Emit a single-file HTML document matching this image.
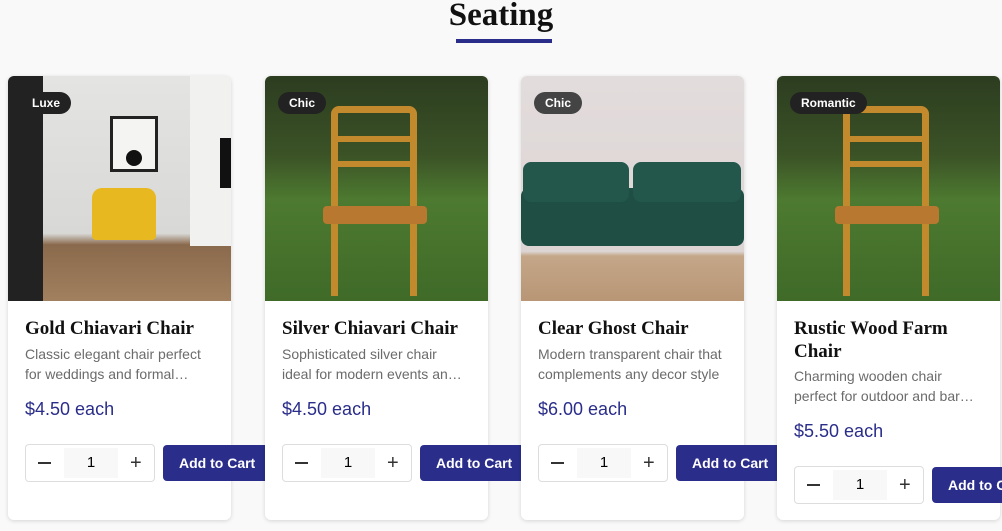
<!DOCTYPE html>
<html><head><meta charset="utf-8"><style>
*{margin:0;padding:0;box-sizing:border-box}
body{width:1002px;height:531px;overflow:hidden;background:#f9f9f9;font-family:"Liberation Sans",sans-serif;position:relative}
h1{position:absolute;top:-3px;left:0;width:1002px;text-align:center;font-family:"Liberation Serif",serif;font-weight:bold;font-size:33px;color:#111}
.bar{position:absolute;left:456px;top:39px;width:96px;height:4px;background:#2a2d8a}
.card{position:absolute;top:76px;width:223px;height:444px;background:#fff;border-radius:6px;box-shadow:0 1px 4px rgba(0,0,0,.15)}
.img{position:absolute;left:0;top:0;width:100%;height:225px;overflow:hidden;border-radius:6px 6px 0 0}
.tag{position:absolute;left:13px;top:16px;height:22px;padding:0 11px;border-radius:11px;background:#222;color:#fff;font-size:12px;font-weight:bold;line-height:22px}
.t{position:absolute;left:17px;top:241px;width:195px;font-family:"Liberation Serif",serif;font-weight:bold;font-size:19px;color:#111;line-height:23px}
.d{position:absolute;left:17px;width:190px;font-size:14px;color:#6b6b6b;line-height:20px;display:-webkit-box;-webkit-line-clamp:2;-webkit-box-orient:vertical;overflow:hidden}
.p{position:absolute;left:17px;font-size:18px;color:#2a2d8a}
.q{position:absolute;left:17px;width:130px;height:38px;border:1px solid #ddd;border-radius:4px;font-size:15px}
.q .m{position:absolute;left:12px;top:17px;width:13px;height:2px;background:#333}
.q .pl{position:absolute;left:104px;top:7px;font-size:20px;color:#333}
.q .n{position:absolute;left:38px;width:54px;top:3px;height:30px;background:#f8f8f8;text-align:center;line-height:30px}
.b{position:absolute;left:155px;width:110px;height:36px;background:#2a2d8a;color:#fff;border-radius:4px;font-size:14px;font-weight:bold;line-height:36px;padding-left:16px;white-space:nowrap;overflow:hidden}
</style></head><body>
<h1>Seating</h1><div class="bar"></div>

<div class="card" style="left:8px">
<div class="img" style="background:linear-gradient(#e4e4e2 0,#d8d8d6 70%,#8a6a4c 75%,#a0805e 100%)">
<div style="position:absolute;left:0;top:0;width:35px;height:225px;background:#222"></div>
<div style="position:absolute;left:182px;top:0;width:41px;height:170px;background:#f1f1ef"></div>
<div style="position:absolute;left:102px;top:40px;width:48px;height:56px;background:#f4f4f2;border:3px solid #222"></div>
<div style="position:absolute;left:118px;top:74px;width:16px;height:16px;border-radius:50%;background:#111"></div>
<div style="position:absolute;left:84px;top:112px;width:64px;height:52px;background:#e8b820;border-radius:10px 10px 4px 4px"></div>
<div style="position:absolute;left:212px;top:62px;width:11px;height:50px;background:#111"></div>
</div>
<div class="tag">Luxe</div>
<div class="t">Gold Chiavari Chair</div>
<div class="d" style="top:268px">Classic elegant chair perfect for weddings and formal events</div>
<div class="p" style="top:323px">$4.50 each</div>
<div class="q" style="top:368px"><i class="m"></i><span class="n">1</span><span class="pl">+</span></div>
<div class="b" style="top:369px">Add to Cart</div>
</div>

<div class="card" style="left:265px">
<div class="img" style="background:linear-gradient(#2c3d20 0,#3b5226 35%,#4d7a30 55%,#3f6a28 100%)">
<div style="position:absolute;left:66px;top:30px;width:86px;height:190px;border:7px solid #c28a2c;border-bottom:none;border-radius:8px 8px 0 0"></div>
<div style="position:absolute;left:72px;top:60px;width:74px;height:6px;background:#c28a2c"></div>
<div style="position:absolute;left:72px;top:85px;width:74px;height:6px;background:#c28a2c"></div>
<div style="position:absolute;left:58px;top:130px;width:104px;height:18px;background:#b87830;border-radius:4px"></div>
</div>
<div class="tag">Chic</div>
<div class="t">Silver Chiavari Chair</div>
<div class="d" style="top:268px;width:180px">Sophisticated silver chair ideal for modern events and more</div>
<div class="p" style="top:323px">$4.50 each</div>
<div class="q" style="top:368px"><i class="m"></i><span class="n">1</span><span class="pl">+</span></div>
<div class="b" style="top:369px">Add to Cart</div>
</div>

<div class="card" style="left:521px">
<div class="img" style="background:linear-gradient(#e3dcdc 0,#dcd5d4 78%,#c4a788 80%,#b89676 100%)">
<div style="position:absolute;left:0;top:112px;width:223px;height:58px;background:#1e4e44;border-radius:8px"></div>
<div style="position:absolute;left:2px;top:86px;width:106px;height:40px;background:#24574c;border-radius:8px"></div>
<div style="position:absolute;left:112px;top:86px;width:108px;height:40px;background:#24574c;border-radius:8px"></div>
</div>
<div class="tag" style="background:#444">Chic</div>
<div class="t">Clear Ghost Chair</div>
<div class="d" style="top:268px">Modern transparent chair that complements any decor style</div>
<div class="p" style="top:323px">$6.00 each</div>
<div class="q" style="top:368px"><i class="m"></i><span class="n">1</span><span class="pl">+</span></div>
<div class="b" style="top:369px">Add to Cart</div>
</div>

<div class="card" style="left:777px">
<div class="img" style="background:linear-gradient(#2c3d20 0,#3b5226 35%,#4d7a30 55%,#3f6a28 100%)">
<div style="position:absolute;left:66px;top:30px;width:86px;height:190px;border:7px solid #c28a2c;border-bottom:none;border-radius:8px 8px 0 0"></div>
<div style="position:absolute;left:72px;top:60px;width:74px;height:6px;background:#c28a2c"></div>
<div style="position:absolute;left:72px;top:85px;width:74px;height:6px;background:#c28a2c"></div>
<div style="position:absolute;left:58px;top:130px;width:104px;height:18px;background:#b87830;border-radius:4px"></div>
</div>
<div class="tag">Romantic</div>
<div class="t">Rustic Wood Farm Chair</div>
<div class="d" style="top:290px;width:180px">Charming wooden chair perfect for outdoor and barn weddings</div>
<div class="p" style="top:345px">$5.50 each</div>
<div class="q" style="top:390px"><i class="m"></i><span class="n">1</span><span class="pl">+</span></div>
<div class="b" style="top:391px">Add to Cart</div>
</div>
</body></html>
